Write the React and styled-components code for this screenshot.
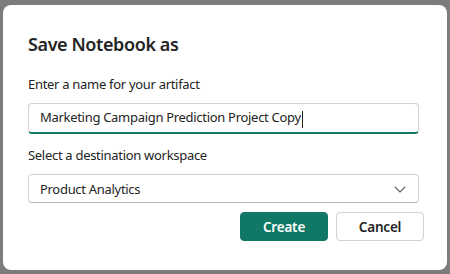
import styled, { createGlobalStyle } from "styled-components";

const Global = createGlobalStyle`
  html, body {
    margin: 0;
    padding: 0;
    background: #7c7c7c;
  }
  body {
    font-family: "Noto Sans", "Open Sans", sans-serif;
    color: #242424;
  }
`;

const Backdrop = styled.div`
  width: 450px;
  height: 274px;
  padding: 5px 3px 0;
  box-sizing: border-box;
`;

const Dialog = styled.div`
  width: 444px;
  height: 265px;
  box-sizing: border-box;
  background: #fff;
  border-radius: 8px;
  padding: 26px 23px 0 25px;
  display: flex;
  flex-direction: column;
`;

const Title = styled.h2`
  margin: 0;
  font-size: 18px;
  font-weight: 600;
  letter-spacing: -0.4px;
  line-height: 26px;
`;

const Label = styled.label`
  display: block;
  font-size: 13px;
  letter-spacing: -0.3px;
  line-height: 20px;
  margin-top: ${(p) => p.top}px;
`;

const Field = styled.div`
  width: 391px;
  height: ${(p) => p.h}px;
  box-sizing: border-box;
  margin-top: 9px;
  border: 1px solid #d1d1d1;
  border-bottom: ${(p) => (p.focused ? "2px solid #117865" : "1px solid #b8b8b8")};
  border-radius: 4px;
  padding: 0 11px;
  display: flex;
  align-items: center;
  justify-content: space-between;
  font-size: 13px;
  letter-spacing: -0.3px;
`;

const Caret = styled.span`
  display: inline-block;
  width: 1px;
  height: 17px;
  background: #242424;
  vertical-align: middle;
  margin-left: 1px;
`;

const Actions = styled.div`
  display: flex;
  justify-content: flex-end;
  gap: 8px;
  margin-top: 9px;
`;

const Button = styled.button`
  width: 88px;
  height: 29px;
  border-radius: 4px;
  font-family: inherit;
  font-size: 13.5px;
  font-weight: 600;
  letter-spacing: -0.2px;
  border: 1px solid ${(p) => (p.primary ? "#117865" : "#d1d1d1")};
  background: ${(p) => (p.primary ? "#117865" : "#fff")};
  color: ${(p) => (p.primary ? "#fff" : "#242424")};
  padding: 0;
`;

function Chevron() {
  return (
    <svg width="14" height="14" viewBox="0 0 14 14" fill="none">
      <path d="M2 5l5 5 5-5" stroke="#616161" strokeWidth="1.1" strokeLinecap="round" strokeLinejoin="round" />
    </svg>
  );
}

export default function App() {
  return (
    <>
      <Global />
      <Backdrop>
        <Dialog>
          <Title>Save Notebook as</Title>
          <Label top={17}>Enter a name for your artifact</Label>
          <Field h={31} focused>
            <span>
              Marketing Campaign Prediction Project Copy
              <Caret />
            </span>
          </Field>
          <Label top={11}>Select a destination workspace</Label>
          <Field h={29}>
            <span>Product Analytics</span>
            <Chevron />
          </Field>
          <Actions>
            <Button primary>Create</Button>
            <Button>Cancel</Button>
          </Actions>
        </Dialog>
      </Backdrop>
    </>
  );
}
